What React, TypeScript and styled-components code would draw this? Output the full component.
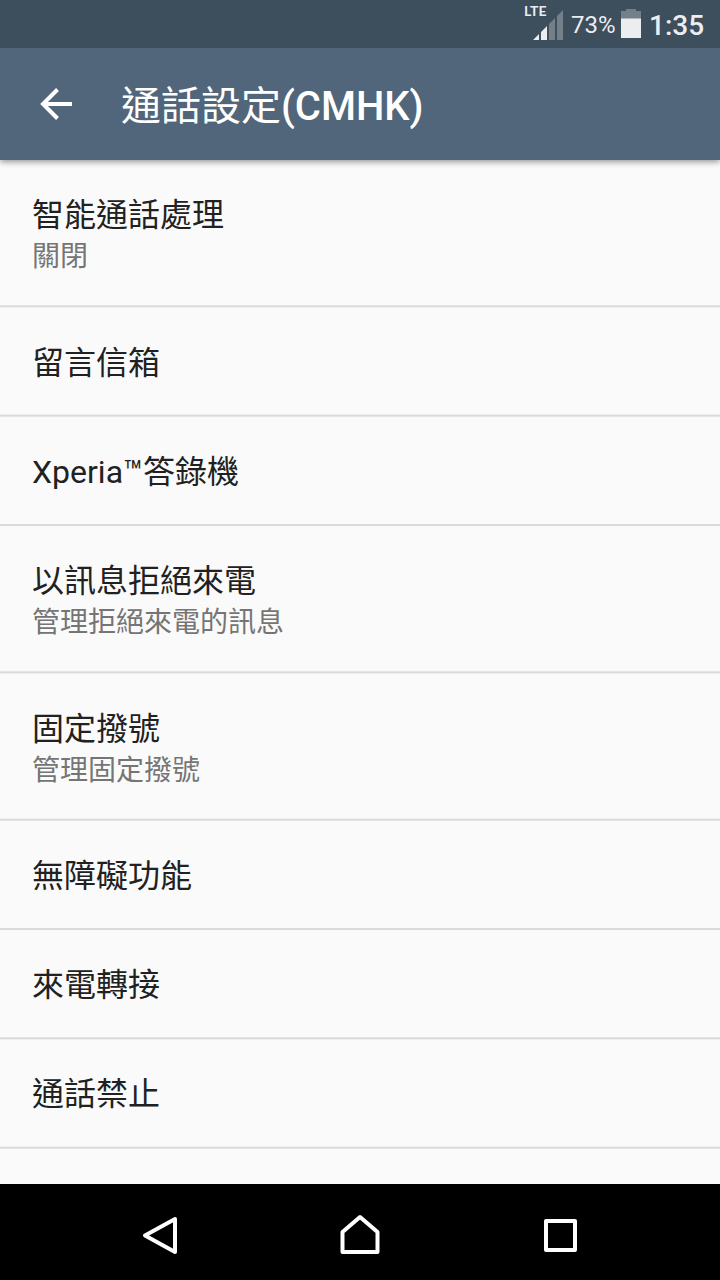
import React, { Fragment } from 'react';
import styled, { createGlobalStyle } from 'styled-components';

const Global = createGlobalStyle`
  * { box-sizing: border-box; }
  body { margin: 0; background: #fafafa; font-family: Roboto, 'Noto Sans CJK TC', sans-serif; }
`;

const Screen = styled.div`
  width: 720px;
  height: 1280px;
  display: flex;
  flex-direction: column;
  overflow: hidden;
  background: #fafafa;
`;

const StatusBar = styled.header`
  flex: none;
  position: relative;
  z-index: 2;
  height: 48px;
  display: flex;
  align-items: flex-start;
  justify-content: flex-end;
  padding-right: 16px;
  background: #3d4e5c;
  color: #ecedef;
`;

const Signal = styled.div`
  width: 40px;
  height: 48px;
  margin-right: 7px;
`;

const SignalLabel = styled.div`
  height: 10px;
  padding-top: 4px;
  font: 700 14px/14px Lato, sans-serif;
`;

const SignalBars = styled.svg`
  display: block;
  margin-left: 9px;
`;

const Percent = styled.span`
  width: 45px;
  font-size: 24px;
  line-height: 51px;
  white-space: nowrap;
`;

const Battery = styled.svg`
  display: block;
  margin: 9px 8px 0 5px;
`;

const Clock = styled.span`
  width: 55px;
  font-size: 28px;
  font-weight: 500;
  line-height: 52px;
  white-space: nowrap;
`;

const AppBar = styled.div`
  flex: none;
  position: relative;
  height: 112px;
  display: flex;
  align-items: center;
  padding-left: 32px;
  background: #51667a;
  color: #fff;
  box-shadow: 0 2px 6px rgba(0, 0, 0, 0.4);
`;

const BackButton = styled.button`
  width: 48px;
  height: 48px;
  margin-right: 41px;
  padding: 0;
  border: 0;
  background: none;
  color: inherit;
`;

const Title = styled.h1`
  margin: 5px 0 0;
  font-size: 40px;
  line-height: 48px;
  font-weight: 500;
`;

const TitleScript = styled.span`
  font-weight: 400;
`;

const List = styled.main`
  flex: 1;
  min-height: 0;
  overflow: hidden;
`;

const Row = styled.section<{ $height: number; $top?: number }>`
  height: ${(p) => p.$height}px;
  padding: ${(p) => p.$top ?? 31}px 32px 0;
`;

type Edge = 'sharp' | 'upper' | 'lower';

const edgeFill: Record<Edge, string> = {
  sharp: '#dadada',
  upper: 'linear-gradient(#e5e5e5 1px, #dadada 1px 2px, #efefef 2px)',
  lower: 'linear-gradient(#efefef 1px, #dadada 1px 2px, #e5e5e5 2px)',
};

const Divider = styled.div<{ $edge: Edge }>`
  height: ${(p) => (p.$edge === 'sharp' ? 2 : 3)}px;
  background: ${(p) => edgeFill[p.$edge]};
`;

const Label = styled.div`
  font-size: 32px;
  line-height: 48px;
  color: #212121;
`;

const Summary = styled.div`
  font-size: 28px;
  line-height: 35px;
  color: #757575;
`;

const NavBar = styled.nav`
  flex: none;
  height: 96px;
  display: flex;
  justify-content: center;
  background: #000;
`;

const NavButton = styled.button`
  width: 200px;
  height: 96px;
  padding: 0;
  border: 0;
  background: none;
`;

const NavIcon = styled.svg`
  display: block;
  fill: none;
  stroke: #fff;
  stroke-width: 4;
  stroke-linejoin: round;
`;

interface Setting {
  label: string;
  summary?: string;
  height: number;
  top?: number;
  edge: Edge;
}

const rows: Setting[] = [
  { label: '智能通話處理', summary: '關閉', height: 145, edge: 'upper' },
  { label: '留言信箱', height: 106, edge: 'lower' },
  { label: 'Xperia™答錄機', height: 107, edge: 'sharp' },
  { label: '以訊息拒絕來電', summary: '管理拒絕來電的訊息', height: 145, edge: 'upper' },
  { label: '固定撥號', summary: '管理固定撥號', height: 144, edge: 'lower' },
  { label: '無障礙功能', height: 107, edge: 'sharp' },
  { label: '來電轉接', height: 107, edge: 'upper' },
  { label: '通話禁止', height: 106, top: 30, edge: 'lower' },
];

export default function App() {
  return (
    <Screen>
      <Global />
      <StatusBar>
        <Signal>
          <SignalLabel>LTE</SignalLabel>
          <SignalBars width="31" height="30" viewBox="0 0 31 30">
            <path d="M0 30 6 24V30ZM8 22 14 16V30H8Z" fill="#ecedef" />
            <path d="M16 14 22 8V30H16ZM24 6 30 0V30H24Z" fill="#73808a" />
          </SignalBars>
        </Signal>
        <Percent>73%</Percent>
        <Battery width="20" height="29" viewBox="0 0 20 29">
          <path d="M0 2H5V0H15V2H20V10H0Z" fill="#73808a" />
          <path d="M0 9.5H20V29H0Z" fill="#ecedef" />
        </Battery>
        <Clock>1:35</Clock>
      </StatusBar>
      <AppBar>
        <BackButton aria-label="返回">
          <svg width="48" height="48" viewBox="0 0 48 48" fill="none" stroke="#fff" strokeWidth="4">
            <path d="M40 24H11M25.5 9.5 11 24 25.5 38.5" />
          </svg>
        </BackButton>
        <Title><TitleScript>通話設定</TitleScript>(CMHK)</Title>
      </AppBar>
      <List>
        {rows.map((r) => (
          <Fragment key={r.label}>
            <Row $height={r.height} $top={r.top}>
              <Label>{r.label}</Label>
              {r.summary && <Summary>{r.summary}</Summary>}
            </Row>
            <Divider $edge={r.edge} />
          </Fragment>
        ))}
      </List>
      <NavBar>
        <NavButton aria-label="返回">
          <NavIcon width="200" height="96" viewBox="60 0 200 96">
            <path d="M175 35V68L145 51.5Z" />
          </NavIcon>
        </NavButton>
        <NavButton aria-label="主畫面">
          <NavIcon width="200" height="96" viewBox="260 0 200 96">
            <path d="M342.500 68V48L360 33 377.500 48V68Z" />
          </NavIcon>
        </NavButton>
        <NavButton aria-label="最近">
          <NavIcon width="200" height="96" viewBox="460 0 200 96">
            <path d="M546 37H575V66H546Z" />
          </NavIcon>
        </NavButton>
      </NavBar>
    </Screen>
  );
}
